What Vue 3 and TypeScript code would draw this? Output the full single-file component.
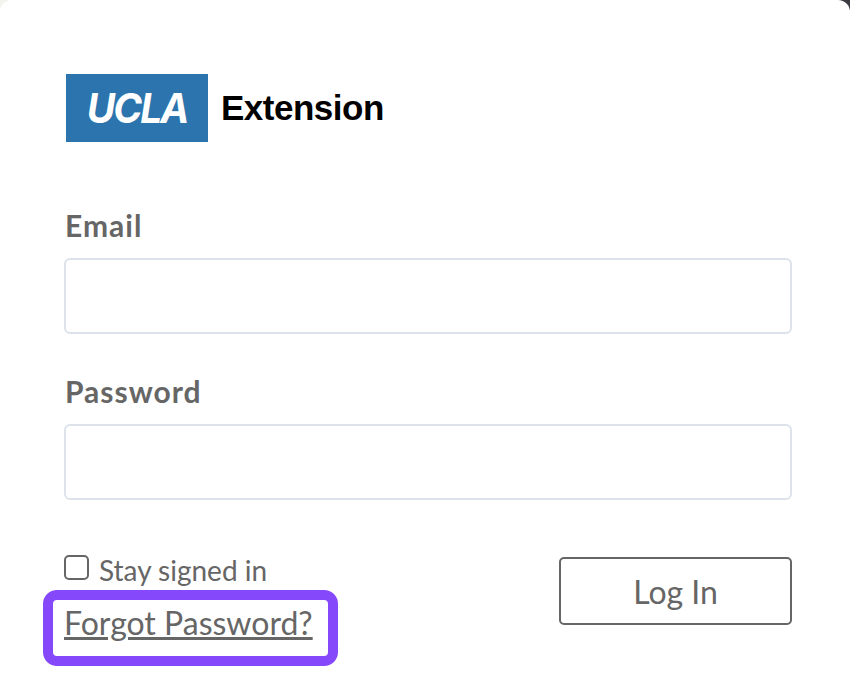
<script setup lang="ts">
import { ref } from 'vue'

const email = ref<string>('')
const password = ref<string>('')
const stay = ref<boolean>(false)
</script>

<template>
  <div class="page">
    <main class="card">
      <div class="logo">
        <div class="logo-box"><span class="logo-ucla">UCLA</span></div>
        <span class="logo-ext">Extension</span>
      </div>
      <form class="form" @submit.prevent>
        <label class="field">
          <span class="field-label">Email</span>
          <input v-model="email" class="input" type="text" />
        </label>
        <label class="field">
          <span class="field-label">Password</span>
          <input v-model="password" class="input" type="password" />
        </label>
        <div class="actions">
          <div class="links">
            <label class="stay">
              <input v-model="stay" class="check" type="checkbox" />
              <span>Stay signed in</span>
            </label>
            <div class="highlight">
              <a class="forgot" href="#">Forgot Password?</a>
            </div>
          </div>
          <button class="login" type="submit">Log In</button>
        </div>
      </form>
    </main>
  </div>
</template>

<style>
html, body { margin: 0; background: #fff; }
</style>

<style scoped>
.page {
  width: 850px;
  height: 698px;
  overflow: hidden;
  background: linear-gradient(to right, #f4f4ee 0 50%, #3a3a40 50% 100%);
}
.card {
  box-sizing: border-box;
  width: 850px;
  height: 698px;
  padding: 74px 58px 0 64px;
  background: #fff;
  border-radius: 12px 12px 0 0;
  font-family: Lato, "Liberation Sans", sans-serif;
  color: #666;
}
.logo { display: flex; align-items: center; gap: 13px; height: 68px; }
.logo-box {
  box-sizing: border-box;
  width: 142px;
  height: 68px;
  margin-left: 2px;
  background: #2c74ad;
  display: flex;
  align-items: center;
  justify-content: center;
}
.logo-ucla {
  color: #fff;
  font-family: Inter, "Liberation Sans", sans-serif;
  font-size: 41px;
  font-style: italic;
  font-weight: 700;
  letter-spacing: -2px;
  transform: scaleX(0.95);
}
.logo-ext {
  color: #000;
  font-family: "Liberation Sans", Arial, sans-serif;
  font-size: 35px;
  font-weight: 700;
  letter-spacing: -0.5px;
}
.form { margin-top: 66px; display: flex; flex-direction: column; gap: 40px; }
.field { display: flex; flex-direction: column; gap: 18px; }
.field-label {
  font-size: 30px;
  font-weight: 700;
  letter-spacing: 1px;
  line-height: 34px;
  height: 32px;
  margin-left: 1px;
  color: #666;
}
.input {
  box-sizing: border-box;
  width: 728px;
  height: 76px;
  border: 2px solid #dde3ea;
  border-radius: 6px;
  background: #fff;
  outline: none;
}
.actions {
  margin-top: 13px;
  display: flex;
  justify-content: space-between;
  align-items: flex-start;
  width: 728px;
}
.links { display: flex; flex-direction: column; }
.stay { display: flex; align-items: center; gap: 10px; font-size: 28px; line-height: 34px; height: 34px; }
.check {
  appearance: none;
  box-sizing: border-box;
  width: 25px;
  height: 25px;
  margin: 0;
  border: 2px solid #666;
  border-radius: 5px;
  background: #fff;
  transform: translateY(-3px);
}
.highlight {
  box-sizing: border-box;
  width: 295px;
  margin: 3px 0 0 -21px;
  height: 76px;
  padding: 9px 0 0 22px;
  border: 10px solid #8549fb;
  border-radius: 14px;
}
.forgot {
  display: block;
  margin: -4px 0 0 -11px;
  font-size: 32px;
  line-height: 36px;
  color: #666;
  text-decoration: underline;
  white-space: nowrap;
}
.login {
  box-sizing: border-box;
  width: 233px;
  height: 68px;
  margin-top: 4px;
  border: 2px solid #666;
  border-radius: 5px;
  background: #fff;
  color: #666;
  font-family: inherit;
  font-size: 32px;
}
</style>
